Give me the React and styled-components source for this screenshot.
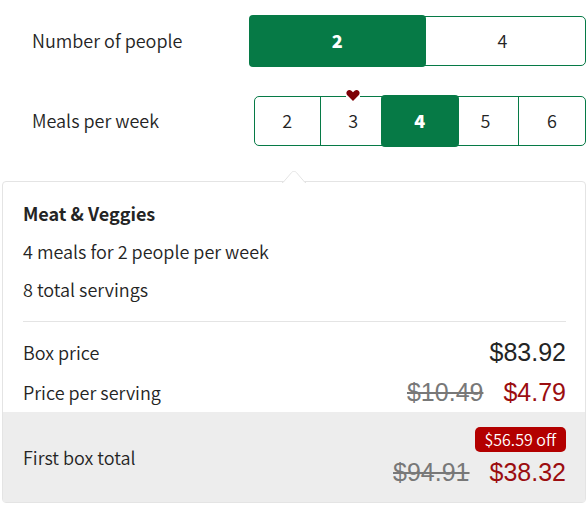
import React, { useState } from "react";
import styled, { createGlobalStyle } from "styled-components";

const GREEN = "#067a46";
const RED = "#9b0d10";
const BORDER = "#e4e4e4";

const GlobalStyle = createGlobalStyle`
  * {
    box-sizing: border-box;
  }

  body {
    margin: 0;
    background: #fff;
    color: #242424;
    font-family: "Noto Sans CJK SC", "Noto Sans", sans-serif;
    font-size: 18px;
    font-weight: 350;
    line-height: 28px;
  }
`;

const Settings = styled.div`
  display: grid;
  gap: 30px;
  padding: 16px 1px 0 32px;
`;

const SettingRow = styled.div`
  display: grid;
  grid-template-columns: minmax(0, 2fr) minmax(0, 3fr);
  align-items: center;
`;

const SettingLabel = styled.span`
  padding-bottom: 2px;
`;

const Segments = styled.div`
  display: grid;
  grid-auto-flow: column;
  grid-auto-columns: minmax(0, 1fr);
  height: 50px;
  border: 1px solid ${GREEN};
  border-radius: 5px;
`;

const Segment = styled.label`
  position: relative;
  display: flex;
  align-items: center;
  justify-content: center;
  padding-bottom: 2px;
  cursor: pointer;

  &:not(:last-child) {
    border-right: 1px solid ${GREEN};
  }

  &:has(:checked) {
    z-index: 1;
    margin: -2px -6px;
    border: 0;
    border-radius: 4px;
    background: ${GREEN};
    color: #fff;
    font-weight: 900;
  }

  &:has(:focus-visible) {
    outline: 2px solid #242424;
  }
`;

const SegmentInput = styled.input`
  position: absolute;
  inset: 0;
  margin: 0;
  opacity: 0;
  cursor: pointer;
`;

const Favourite = styled.svg`
  position: absolute;
  top: -9px;
  left: 50%;
  margin-left: -9px;
  width: 18px;
  height: 14px;
`;

const Card = styled.section`
  position: relative;
  margin: 35px 1px 2px 2px;
  border: 1px solid ${BORDER};
  border-radius: 4px;
`;

const Caret = styled.svg`
  position: absolute;
  top: -11px;
  left: 50%;
  margin-left: -12px;
  width: 24px;
  height: 12px;
`;

const Plan = styled.div`
  display: grid;
  gap: 10px;
  margin: 0 19px 0 20px;
  padding: 17px 0 18px;
  border-bottom: 1px solid ${BORDER};
`;

const PlanName = styled.h2`
  margin: 0;
  font-size: 18px;
  font-weight: 700;
`;

const PlanText = styled.p`
  margin: 0;
`;

const Prices = styled.dl`
  margin: 0;
  padding-top: 10px;
`;

const PriceRow = styled.div`
  display: flex;
  align-items: center;
  justify-content: space-between;
  height: ${(props) => (props.$total ? "90px" : "40px")};
  padding: 0 19px 0 20px;
  background: ${(props) => (props.$total ? "#ededed" : "transparent")};
`;

const PriceLabel = styled.dt`
  margin: 0;
`;

const PriceValue = styled.dd`
  display: flex;
  flex-direction: column;
  align-items: flex-end;
  gap: 4px;
  margin: 0;
`;

const Amounts = styled.div`
  display: flex;
  gap: 20px;
  font-family: "Liberation Sans", Arial, sans-serif;
  font-size: 25px;
  line-height: 32px;
`;

const Amount = styled.span`
  color: ${(props) => (props.$sale ? RED : "inherit")};
`;

const OldAmount = styled.s`
  color: #787878;
  text-decoration-thickness: 2px;
`;

const Badge = styled.span`
  padding: 0 10px;
  border-radius: 5px;
  background: #b30000;
  color: #fff;
  font-size: 16px;
  line-height: 25px;
`;

const SegmentedControl = ({ name, label, options, favourite, value, onChange }) => (
  <SettingRow>
    <SettingLabel id={`${name}-label`}>{label}</SettingLabel>
    <Segments role="radiogroup" aria-labelledby={`${name}-label`}>
      {options.map((option) => (
        <Segment key={option}>
          <SegmentInput
            type="radio"
            name={name}
            value={option}
            checked={option === value}
            onChange={() => onChange(option)}
          />
          {option}
          {option === favourite && (
            <Favourite viewBox="0 0 18 14" aria-hidden="true">
              <path fill="#fff" d="M2 6h14v4H2z" />
              <path
                fill="#7d0006"
                stroke="#fff"
                strokeWidth="2"
                paintOrder="stroke"
                d="M9 13 3.3 7.2C2.1 5.9 2.1 4 3.2 2.9c1.1-1.1 3-1.2 4.2-.1L9 4.2l1.6-1.4c1.2-1.1 3.1-1 4.2.1 1.1 1.1 1.1 3-.1 4.3z"
              />
            </Favourite>
          )}
        </Segment>
      ))}
    </Segments>
  </SettingRow>
);

const Price = ({ label, before, amount, badge, total }) => (
  <PriceRow $total={total}>
    <PriceLabel>{label}</PriceLabel>
    <PriceValue>
      {badge && <Badge>{badge}</Badge>}
      <Amounts>
        {before && <OldAmount>{before}</OldAmount>}
        <Amount $sale={Boolean(before)}>{amount}</Amount>
      </Amounts>
    </PriceValue>
  </PriceRow>
);

const App = () => {
  const [people, setPeople] = useState(2);
  const [meals, setMeals] = useState(4);

  return (
    <main>
      <GlobalStyle />
      <Settings>
        <SegmentedControl
          name="people"
          label="Number of people"
          options={[2, 4]}
          value={people}
          onChange={setPeople}
        />
        <SegmentedControl
          name="meals"
          label="Meals per week"
          options={[2, 3, 4, 5, 6]}
          favourite={3}
          value={meals}
          onChange={setMeals}
        />
      </Settings>
      <Card>
        <Caret viewBox="0 0 24 12" aria-hidden="true">
          <path
            fill="#fff"
            stroke={BORDER}
            d="M0 11.5h1L9.5 1.6q.8-1.1 2-1.1h1q1.2 0 2 1.1L23 11.5h1"
          />
          <path fill="#fff" d="M2 11h20v1H2z" />
        </Caret>
        <Plan>
          <PlanName>Meat &amp; Veggies</PlanName>
          <PlanText>
            {meals} meals for {people} people per week
          </PlanText>
          <PlanText>{meals * people} total servings</PlanText>
        </Plan>
        <Prices>
          <Price label="Box price" amount="$83.92" />
          <Price label="Price per serving" before="$10.49" amount="$4.79" />
          <Price
            label="First box total"
            before="$94.91"
            amount="$38.32"
            badge="$56.59 off"
            total
          />
        </Prices>
      </Card>
    </main>
  );
};

export default App;
